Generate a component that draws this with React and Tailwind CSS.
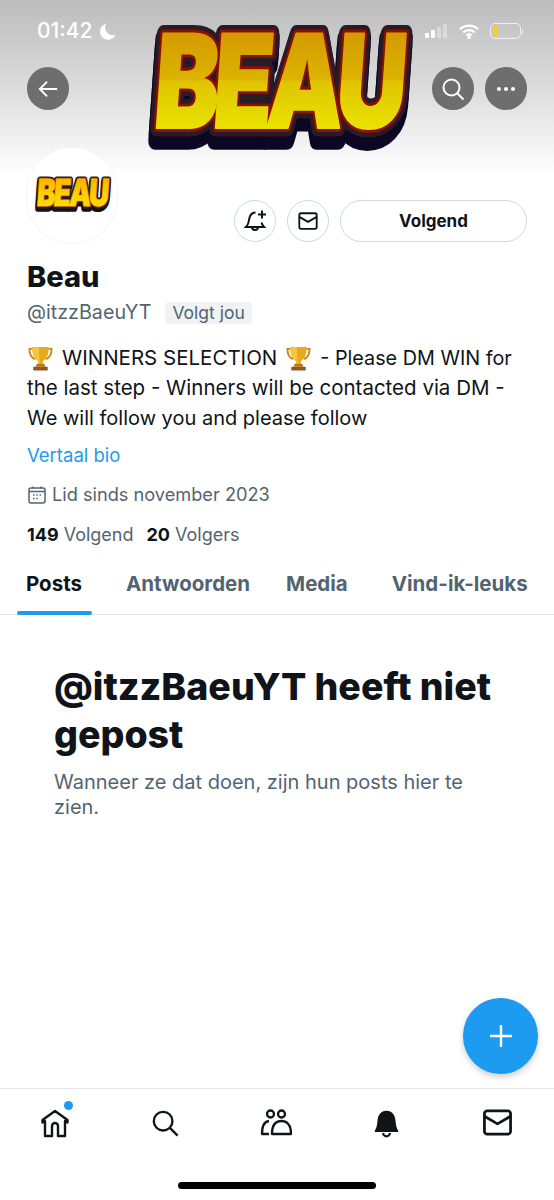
import React from 'react';

const Logo = ({ id, top, mid, midBright, bottom, shadow, edge, className }) => (
    <svg viewBox="0 0 264 136" className={`overflow-visible ${className}`}>
        <defs>
            <linearGradient id={id} gradientUnits="userSpaceOnUse" x1="0" y1="-73" x2="0" y2="0">
                <stop offset="0" stopColor={top} />
                <stop offset="0.49" stopColor={mid} />
                <stop offset="0.51" stopColor={midBright} />
                <stop offset="1" stopColor={bottom} />
            </linearGradient>
        </defs>
        {/* the word is stretched tall and squeezed so that letters touch, like the logo */}
        <g fontFamily="Inter, 'Liberation Sans', sans-serif" fontWeight="900" fontSize="100" textAnchor="middle">
            <g transform="translate(130 103) skewX(-4) scale(0.97 1.3)" strokeLinejoin="round">
                <text y="9" fill={shadow} stroke={shadow} strokeWidth="15" letterSpacing="-6">BEAU</text>
                <text y="4" fill={shadow} stroke={shadow} strokeWidth="15" letterSpacing="-6">BEAU</text>
                <text fill="#2a1c26" stroke="#2a1c26" strokeWidth="13" letterSpacing="-6">BEAU</text>
                <text fill={edge} stroke={edge} strokeWidth="6" letterSpacing="-6">BEAU</text>
                <text fill={`url(#${id})`} stroke={`url(#${id})`} strokeWidth="1.500" letterSpacing="-6">BEAU</text>
            </g>
        </g>
    </svg>
);

const Trophy = () => (
    <svg viewBox="0 0 28 28" className="w-[27px] h-[27px] shrink-0">
        <path d="M6 4H2.500c0 6 2 9.500 6 10.500M22 4h3.500c0 6-2 9.500-6 10.500" fill="none" stroke="#c98a1a" strokeWidth="2" />
        <path d="M5.500 2h17c0 7-1.500 12-6 14.500v3h-5v-3C7 14 5.500 9 5.500 2z" fill="#e8a91f" />
        <path d="M5.500 2h7c0 7 0 12 1 17.500h-2v-3C7 14 5.500 9 5.500 2z" fill="#f5c63c" />
        <path d="M10 19.500h8l1 3h-10z" fill="#b9771a" />
        <rect x="6.500" y="22.500" width="15" height="4" rx="0.500" fill="#8f5a1e" />
    </svg>
);

const Circle = ({ children }) => (
    <button className="w-[42px] h-[43px] rounded-full bg-[#6e6e6e] flex items-center justify-center">
        {children}
    </button>
);

const OutlineCircle = ({ children }) => (
    <button className="w-[42px] h-[42px] rounded-full border-[1.5px] border-[#cfd9de] bg-white flex items-center justify-center">
        {children}
    </button>
);

const MailIcon = ({ size }) => (
    <svg width={size} height={size} viewBox="0 0 24 24" fill="none" stroke="#0f1419" strokeWidth="2" strokeLinejoin="round">
        <rect x="2.500" y="3.500" width="19" height="17" rx="2" />
        <path d="M2.500 7.500 12 13l9.500-5.500" />
    </svg>
);

const Tab = ({ label, active, className }) => (
    <div className={`relative h-full flex items-center font-bold text-[20.5px] ${active ? 'text-[#0f1419]' : 'text-[#536471]'} ${className}`}>
        {label}
    </div>
);

const App = () => {
    return (
        <div className="relative w-[554px] h-[1200px] overflow-hidden bg-white flex flex-col font-['Inter','Liberation_Sans',sans-serif] text-[#0f1419]">
            {/* banner */}
            <div className="relative h-[175px] shrink-0 bg-gradient-to-b from-[#bcbcbc] via-[#dcdcdc] to-white">
                <div className="flex items-center justify-between pl-[37px] pr-[31px] pt-[19px] h-[43px]">
                    <div className="flex items-center gap-[7px] text-white text-[21px] font-medium">
                        <span>01:42</span>
                        <svg width="17" height="17" viewBox="0 0 24 24" fill="white">
                            <path d="M10 1A11.500 11.500 0 1 0 23.500 16.500 11 11 0 0 1 10 1z" />
                        </svg>
                    </div>
                    <div className="flex items-center gap-[11px]">
                        <svg width="23" height="14" viewBox="0 0 23 14">
                            <rect x="0" y="9" width="4" height="5" rx="1" fill="white" />
                            <rect x="6" y="6" width="4" height="8" rx="1" fill="white" />
                            <rect x="12" y="3" width="4" height="11" rx="1" fill="white" opacity="0.35" />
                            <rect x="18" y="0" width="4" height="14" rx="1" fill="white" opacity="0.35" />
                        </svg>
                        <svg width="20" height="15" viewBox="0 0 20 15" fill="none" stroke="white" strokeWidth="2.200">
                            <path d="M1 5.200a13 13 0 0 1 18 0" />
                            <path d="M4.200 8.500a8.500 8.500 0 0 1 11.600 0" />
                            <path d="M7.300 11.500a4 4 0 0 1 5.400 0" />
                            <circle cx="10" cy="13.500" r="0.600" fill="white" />
                        </svg>
                        <div className="flex items-center gap-[1px]">
                            <div className="w-[31px] h-[16px] rounded-[5px] border border-white/70 p-[2px]">
                                <div className="w-[4px] h-full rounded-[1px] bg-[#f7d312]" />
                            </div>
                            <div className="w-[1px] h-[5px] bg-white/60" />
                        </div>
                    </div>
                </div>
                <div className="flex items-center justify-between px-[27px] mt-[24px]">
                    <Circle>
                        <svg width="22" height="22" viewBox="0 0 24 24" fill="none" stroke="white" strokeWidth="2">
                            <path d="M22 12H3M11 4l-8 8 8 8" />
                        </svg>
                    </Circle>
                    <div className="flex gap-[11px]">
                        <Circle>
                            <svg width="24" height="24" viewBox="0 0 24 24" fill="none" stroke="white" strokeWidth="2">
                                <circle cx="10.500" cy="10.500" r="8" />
                                <path d="m16.500 16.500 6 6" />
                            </svg>
                        </Circle>
                        <Circle>
                            <svg width="22" height="6" viewBox="0 0 22 6" fill="white">
                                <circle cx="4" cy="3" r="2" />
                                <circle cx="11" cy="3" r="2" />
                                <circle cx="18" cy="3" r="2" />
                            </svg>
                        </Circle>
                    </div>
                </div>
                <Logo
                    id="bannerFill"
                    top="#d49a00"
                    mid="#dcb400"
                    midBright="#e0c400"
                    bottom="#e9e200"
                    shadow="#0c0722"
                    edge="#8e0f00"
                    className="absolute left-[145px] top-[25px] w-[264px] h-[136px]"
                />
            </div>

            {/* profile */}
            <div className="px-[27px] shrink-0">
                <div className="flex items-start justify-between h-[87px]">
                    <div className="relative z-10 w-[90px] h-[95px] -mt-[27px] rounded-full bg-white border-[5px] border-white shadow-[0_0_0_1px_#f5f5f5] flex items-center justify-center">
                        <Logo
                            id="avatarFill"
                            top="#ffb400"
                            mid="#ffc800"
                            midBright="#ffce00"
                            bottom="#ffd800"
                            shadow="#14101f"
                            edge="#8a3a00"
                            className="w-[76px] h-[39px] shrink-0"
                        />
                    </div>
                    <div className="flex items-center gap-[11px] mt-[25px]">
                        <OutlineCircle>
                            <svg width="24" height="24" viewBox="0 0 24 24" fill="none" stroke="#0f1419" strokeWidth="2">
                                <path d="M12.500 3.500C8 3.500 6.500 7 6 11c-.3 3-1.500 5.500-3 7h18c-1-1-2-2.500-2.500-4.500" />
                                <path d="M9 18c0 4 6 4 6 0" />
                                <path d="M19 1.500v8M15 5.500h8" />
                            </svg>
                        </OutlineCircle>
                        <OutlineCircle>
                            <MailIcon size={22} />
                        </OutlineCircle>
                        <button className="w-[187px] h-[42px] pt-[2px] rounded-full border-[1.5px] border-[#cfd9de] bg-white font-bold text-[17px]">
                            Volgend
                        </button>
                    </div>
                </div>

                <div className="text-[29px] leading-[34px] font-extrabold mt-[-2px]">Beau</div>
                <div className="flex items-center mt-[5px] h-[27px] text-[#536471]">
                    <span className="text-[19.7px]">@itzzBaeuYT</span>
                    <span className="ml-[14px] px-[7px] h-[22px] leading-[22px] rounded-[4px] bg-[#eff3f4] text-[17.5px]">Volgt jou</span>
                </div>
                <div className="mt-[17px] text-[20.5px] leading-[30px]">
                    <div className="flex items-center gap-[8px]">
                        <Trophy />
                        <span>WINNERS SELECTION</span>
                        <Trophy />
                        <span className="text-[19.8px]">- Please DM WIN for</span>
                    </div>
                    <div>the last step - Winners will be contacted via DM -</div>
                    <div className="text-[20px]">We will follow you and please follow</div>
                </div>
                <div className="mt-[9px] text-[#1d9bf0] text-[18.5px] leading-[26px]">Vertaal bio</div>
                <div className="flex items-center gap-[5px] mt-[14px] h-[26px] text-[#536471] text-[18.2px]">
                    <svg width="20" height="20" viewBox="0 0 20 20" fill="none" stroke="#536471" strokeWidth="1.500">
                        <rect x="2" y="3" width="16" height="15" rx="2" />
                        <path d="M2 6.500h16" />
                        <path d="M6 1.500v2M14 1.500v2" />
                        <path d="M6 10h1.500M9.300 10h1.500M12.600 10h1.500M6 13.500h1.500M9.300 13.500h1.500" />
                    </svg>
                    <span>Lid sinds november 2023</span>
                </div>
                <div className="flex items-center mt-[13px] h-[26px] text-[18px]">
                    <span className="font-bold">149</span>
                    <span className="ml-[5px] text-[#536471]">Volgend</span>
                    <span className="ml-[13px] font-bold">20</span>
                    <span className="ml-[5px] text-[#536471]">Volgers</span>
                </div>
            </div>

            {/* tabs */}
            <div className="relative flex h-[61px] mt-[7px] shrink-0 border-b border-[#e1e8ed]">
                <Tab label="Posts" active className="ml-[26px]" />
                <Tab label="Antwoorden" className="ml-[44px]" />
                <Tab label="Media" className="ml-[36px]" />
                <Tab label="Vind-ik-leuks" className="ml-[44px]" />
                <div className="absolute left-[17px] bottom-[-1px] w-[75px] h-[4px] rounded-full bg-[#1d9bf0]" />
            </div>

            {/* empty state */}
            <div className="flex-1 px-[54px] pt-[48px]">
                <div className="text-[37.5px] leading-[48px] font-extrabold">@itzzBaeuYT heeft niet gepost</div>
                <div className="mt-[11px] text-[20px] leading-[25px] text-[#536471]">
                    Wanneer ze dat doen, zijn hun posts hier te zien.
                </div>
            </div>

            {/* compose */}
            <button className="absolute left-[463px] top-[998px] w-[75px] h-[76px] rounded-full bg-[#1d9bf0] shadow-[0_3px_6px_rgba(0,0,0,0.2)] flex items-center justify-center">
                <svg width="24" height="24" viewBox="0 0 24 24" stroke="white" strokeWidth="2.400">
                    <path d="M12 1v22M1 12h22" />
                </svg>
            </button>

            {/* bottom nav */}
            <div className="h-[112px] shrink-0 border-t border-[#e1e8ed] flex flex-col">
                <div className="flex items-center justify-between pl-[40px] pr-[40px] h-[66px] pt-[1px]">
                    <div className="relative">
                        <svg width="30" height="30" viewBox="0 0 30 30" fill="none" stroke="#0f1419" strokeWidth="2.400" strokeLinejoin="round">
                            <path d="M15 3 2.500 12v2.500l2.500-1.500v15h7V18a3 3 0 0 1 6 0v10h7V13l2.500 1.500V12z" />
                        </svg>
                        <div className="absolute right-[-3px] top-[-7px] w-[9px] h-[9px] rounded-full bg-[#1d9bf0]" />
                    </div>
                    <svg width="28" height="28" viewBox="0 0 30 30" fill="none" stroke="#0f1419" strokeWidth="2.500">
                        <circle cx="13" cy="13" r="10" />
                        <path d="m20.500 20.500 8 8" />
                    </svg>
                    <svg width="32" height="30" viewBox="0 0 32 30" fill="none" stroke="#0f1419" strokeWidth="2.300" strokeLinejoin="round">
                        <circle cx="10.500" cy="6" r="3.500" />
                        <circle cx="21.500" cy="6" r="3.500" />
                        <path d="M9 13c-4 .5-7 5-7 13h7" />
                        <path d="M12 26c0-9 3.500-13 9.500-13S31 17 31 26z" />
                    </svg>
                    <svg width="27" height="30" viewBox="0 0 30 30" fill="#0f1419">
                        <path d="M15 1.500c-6.500 0-9.500 5-10 11-.3 4.500-1 8-3 11v1.500h26V23.500c-2-3-2.700-6.500-3-11-.5-6-3.500-11-10-11z" />
                        <path d="M10 26a5 5 0 0 0 10 0h-2.500a2.500 2.500 0 0 1-5 0z" />
                    </svg>
                    <MailIcon size={33} />
                </div>
                <div className="flex-1 flex items-end justify-center pb-[11px]">
                    <div className="w-[198px] h-[7px] rounded-full bg-black" />
                </div>
            </div>
        </div>
    );
};

export default App;
